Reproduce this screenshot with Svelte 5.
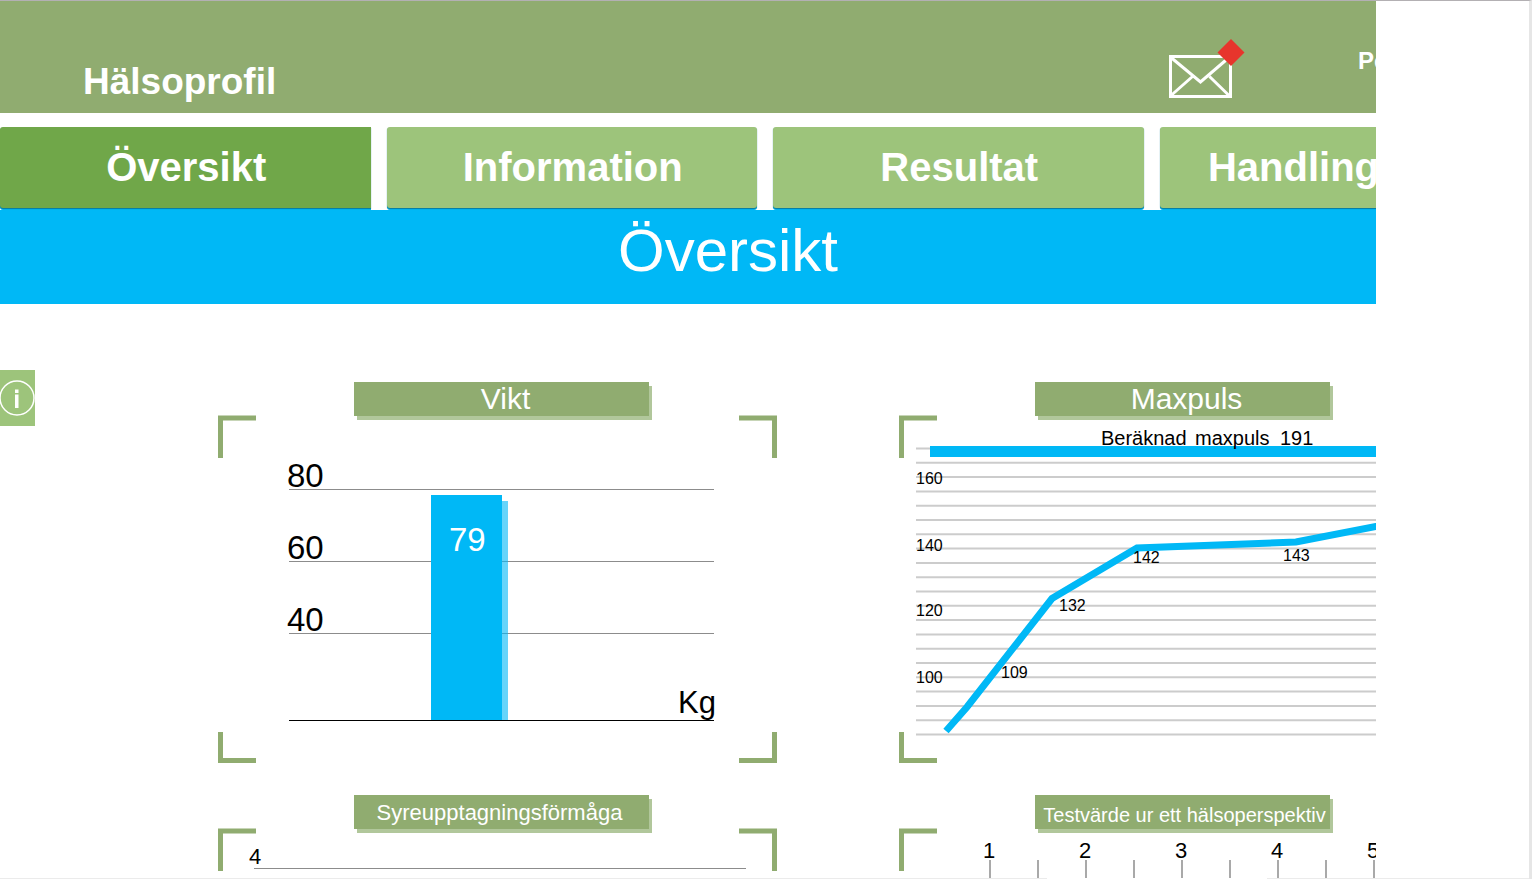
<script>
  const tabs = [
    { label: 'Översikt', active: true },
    { label: 'Information' },
    { label: 'Resultat' },
    { label: 'Handlingsplan' }
  ];

  const weightAxis = [
    { label: '80', y: 75 },
    { label: '60', y: 147 },
    { label: '40', y: 219 }
  ];

  const pulseLines = Array.from({ length: 21 }, (_, i) => 33.5 + i * 14.3);
  const pulseAxis = [
    { label: '160', y: 69 },
    { label: '140', y: 136 },
    { label: '120', y: 201 },
    { label: '100', y: 268 }
  ];
  const pulseValues = [
    { label: '109', x: 102, y: 263 },
    { label: '132', x: 160, y: 196 },
    { label: '142', x: 234, y: 148 },
    { label: '143', x: 384, y: 146 }
  ];

  const ticks = Array.from({ length: 9 }, (_, i) => 91 + i * 48);
  const scale = [1, 2, 3, 4, 5];
</script>

{#snippet corners()}
  <path
    class="corner"
    d="M2.500 43V3H38M521 3H556.500V43M2.500 317V345.500H38M521 345.500H556.500V317"
  />
{/snippet}

<div class="shell">
  <div class="viewport">
    <div class="page">
      <header>
        <a class="logo" href="#start">Hälsoprofil</a>
        <a class="mail" href="#meddelanden" aria-label="Meddelanden">
          <svg width="78" height="60" viewBox="0 0 78 60">
            <g fill="none" stroke="#fff" stroke-width="3">
              <rect x="2.500" y="18.500" width="60" height="40" />
              <path d="M3 19.500L32.500 44L61 19.500M3 57.500L24.500 38.500M61 57.500L41.500 38.500" />
            </g>
            <path d="M63 1L76.500 14.500L63 28L49.500 14.500Z" fill="#e7352c" />
          </svg>
        </a>
        <span class="user">Pe</span>
      </header>

      <nav>
        {#each tabs as tab}
          <a href="#{tab.label}" class:active={tab.active}>{tab.label}</a>
        {/each}
      </nav>

      <h1>Översikt</h1>

      <main>
        <button class="info" aria-label="Info">
          <svg width="35" height="56" viewBox="0 0 35 56">
            <circle cx="17" cy="28" r="17" fill="none" stroke="#fff" stroke-width="1.500" />
            <path d="M15 19.500h3.500v3.500h-3.500zM15 24.500h3.500v13.500h-3.500z" fill="#fff" />
          </svg>
        </button>

        <div class="cards">
          <section>
            <h2>Vikt</h2>
            <svg viewBox="0 0 559 348">
              {@render corners()}
              {#each weightAxis as row}
                <line x1="71" x2="496" y1={row.y - 0.5} y2={row.y - 0.5} stroke="#8c8c8c" />
                <text x="69" y={row.y - 3} font-size="33">{row.label}</text>
              {/each}
              <rect x="213" y="80" width="71" height="225" fill="#00b8f6" />
              <rect x="284" y="86" width="6" height="219" fill="#00b8f6" opacity="0.6" />
              <line x1="71" x2="496" y1="305.500" y2="305.500" stroke="#000" />
              <text x="231" y="136" font-size="33" class="light">79</text>
              <text x="460" y="298" font-size="31">Kg</text>
            </svg>
          </section>

          <section>
            <h2>Maxpuls</h2>
            <svg viewBox="0 0 559 348">
              {@render corners()}
              {#each pulseLines as y}
                <line x1="17" x2="559" y1={y} y2={y} stroke="#ccc" stroke-width="2" />
              {/each}
              <rect x="31" y="31" width="528" height="11" fill="#00b8f6" />
              <polyline
                points="47,316 68,292 153,183.500 238,133 397,127 477,111.500 559,96"
                fill="none"
                stroke="#00b8f6"
                stroke-width="7"
              />
              <text y="30" font-size="20"><tspan x="202">Beräknad </tspan><tspan x="296">maxpuls </tspan><tspan x="381">191</tspan></text>
              {#each pulseAxis as row}
                <text x="17" y={row.y} font-size="16">{row.label}</text>
              {/each}
              {#each pulseValues as v}
                <text x={v.x} y={v.y} font-size="16">{v.label}</text>
              {/each}
            </svg>
          </section>

          <section>
            <h2 class="medium">Syreupptagningsförmåga</h2>
            <svg viewBox="0 0 559 348">
              {@render corners()}
              <text x="31" y="36" font-size="22">4</text>
              <line x1="36" x2="528" y1="40.500" y2="40.500" stroke="#8c8c8c" />
            </svg>
          </section>

          <section>
            <h2 class="small">Testvärde ur ett hälsoperspektiv</h2>
            <svg viewBox="0 0 559 348">
              {@render corners()}
              {#each ticks as x}
                <line x1={x} x2={x} y1="32" y2="62" stroke="#8c8c8c" stroke-width="1.500" />
              {/each}
              {#each scale as n}
                <text x={-6 + n * 96} y="30" font-size="22" text-anchor="middle">{n}</text>
              {/each}
            </svg>
          </section>
        </div>
      </main>
    </div>
  </div>
  <div class="edge"><i></i><i></i></div>
</div>

<style>
  :global(body) {
    margin: 0;
    background: #fff;
  }
  .shell {
    box-sizing: border-box;
    height: 100vh;
    display: flex;
    flex-direction: column;
    overflow: hidden;
    border-top: 1px solid #b3b0b3;
    border-right: 3px solid #e6e6e6;
    font-family: 'Liberation Sans', Arial, Helvetica, sans-serif;
    color: #000;
  }
  .viewport {
    flex: 1;
    min-height: 0;
    margin-right: 153px;
    overflow: hidden;
  }
  .page {
    width: calc(100% + 156px);
  }
  header {
    display: flex;
    height: 112px;
    background: #90ac70;
    color: #fff;
  }
  .logo {
    margin: 56px auto 0 83px;
    font-size: 37px;
    font-weight: bold;
    line-height: 50px;
    color: #fff;
    text-decoration: none;
  }
  .mail {
    margin: 37px 112px 0 0;
  }
  .mail svg,
  .info svg,
  section svg {
    display: block;
  }
  .user {
    width: 174px;
    margin-top: 45px;
    font-size: 24px;
    font-weight: bold;
    line-height: 30px;
  }
  nav {
    display: grid;
    grid-template-columns: repeat(4, 1fr);
    gap: 16px;
    margin-top: 14px;
    padding: 0 2px 2px 0;
    background: #fff;
  }
  nav a {
    padding-left: 2px;
    border-radius: 3px;
    background: #9dc47b;
    box-shadow: 0 1px 1px #08799c, 0 2px 0 #00b8f6;
    color: #fff;
    font-size: 40px;
    font-weight: bold;
    line-height: 81px;
    text-align: center;
    text-decoration: none;
  }
  nav a.active {
    background: #70a749;
    border-radius: 3px 0 0 3px;
  }
  h1 {
    margin: 0;
    padding: 0 76px 12px 0;
    background: #00b8f6;
    color: #fff;
    font-size: 60px;
    font-weight: normal;
    line-height: 82px;
    text-align: center;
  }
  main {
    display: flex;
    align-items: flex-start;
    padding-top: 66px;
  }
  .info {
    padding: 0;
    border: 0;
    background: #9dc47b;
  }
  .cards {
    flex: 1;
    display: grid;
    grid-template-columns: 1fr 1fr;
    gap: 32px 122px;
    padding: 12px 74px 0 183px;
  }
  section {
    display: flex;
    flex-direction: column;
    align-items: center;
  }
  section svg {
    width: 100%;
    margin-top: -1px;
  }
  h2 {
    box-sizing: border-box;
    z-index: 1;
    width: 295px;
    height: 34px;
    margin: 0 0 0 8px;
    padding-left: 8px;
    background: #90ac70;
    box-shadow: 3px 4px 0 #b1c79b;
    color: #fff;
    font-size: 30px;
    font-weight: normal;
    line-height: 34px;
    text-align: center;
    white-space: nowrap;
  }
  h2.medium {
    padding: 0 4px 0 0;
    font-size: 22px;
    line-height: 36px;
  }
  h2.small {
    padding-left: 4px;
    font-size: 20px;
    line-height: 40px;
  }
  .corner {
    fill: none;
    stroke: #90ac70;
    stroke-width: 5;
  }
  .light {
    fill: #fff;
  }
  .edge {
    display: flex;
    gap: 220px;
    height: 1px;
  }
  .edge i {
    flex: 4;
    background: #ebebeb;
  }
  .edge i + i {
    flex: 1;
  }
</style>
